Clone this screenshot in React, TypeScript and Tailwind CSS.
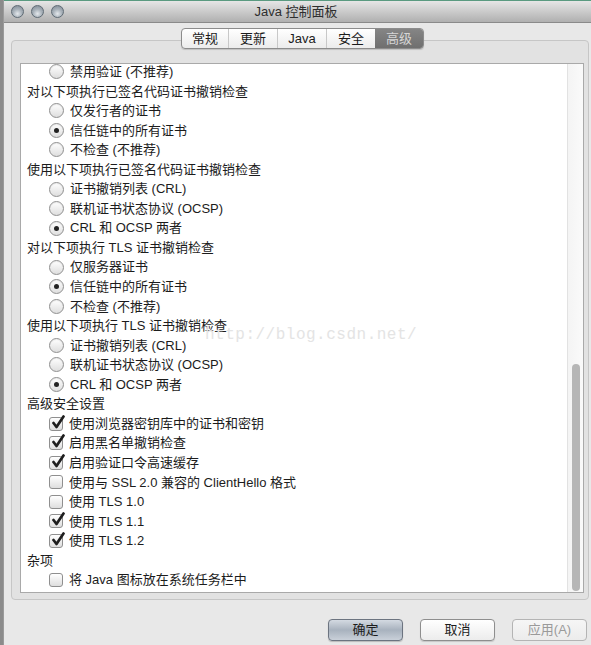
import React from "react";

type Row =
  | { kind: "head"; label: string }
  | { kind: "radio"; label: string; on?: boolean }
  | { kind: "check"; label: string; on?: boolean };

const rows: Row[] = [
  { kind: "radio", label: "禁用验证 (不推荐)" },
  { kind: "head", label: "对以下项执行已签名代码证书撤销检查" },
  { kind: "radio", label: "仅发行者的证书" },
  { kind: "radio", label: "信任链中的所有证书", on: true },
  { kind: "radio", label: "不检查 (不推荐)" },
  { kind: "head", label: "使用以下项执行已签名代码证书撤销检查" },
  { kind: "radio", label: "证书撤销列表 (CRL)" },
  { kind: "radio", label: "联机证书状态协议 (OCSP)" },
  { kind: "radio", label: "CRL 和 OCSP 两者", on: true },
  { kind: "head", label: "对以下项执行 TLS 证书撤销检查" },
  { kind: "radio", label: "仅服务器证书" },
  { kind: "radio", label: "信任链中的所有证书", on: true },
  { kind: "radio", label: "不检查 (不推荐)" },
  { kind: "head", label: "使用以下项执行 TLS 证书撤销检查" },
  { kind: "radio", label: "证书撤销列表 (CRL)" },
  { kind: "radio", label: "联机证书状态协议 (OCSP)" },
  { kind: "radio", label: "CRL 和 OCSP 两者", on: true },
  { kind: "head", label: "高级安全设置" },
  { kind: "check", label: "使用浏览器密钥库中的证书和密钥", on: true },
  { kind: "check", label: "启用黑名单撤销检查", on: true },
  { kind: "check", label: "启用验证口令高速缓存", on: true },
  { kind: "check", label: "使用与 SSL 2.0 兼容的 ClientHello 格式" },
  { kind: "check", label: "使用 TLS 1.0" },
  { kind: "check", label: "使用 TLS 1.1", on: true },
  { kind: "check", label: "使用 TLS 1.2", on: true },
  { kind: "head", label: "杂项" },
  { kind: "check", label: "将 Java 图标放在系统任务栏中" },
];

const tabs = ["常规", "更新", "Java", "安全", "高级"];

function Radio({ on }: { on?: boolean }) {
  return (
    <div className="w-[15px] h-[15px] rounded-full border border-[#8f8f8f] bg-gradient-to-b from-white to-[#dedede] flex items-center justify-center shadow-[inset_0_1px_1px_rgba(0,0,0,0.08)]">
      {on && <div className="w-[5px] h-[5px] rounded-full bg-[#222]" />}
    </div>
  );
}

function Check({ on }: { on?: boolean }) {
  return (
    <div className="relative w-[14px] h-[14px] rounded-[3px] border border-[#8f8f8f] bg-gradient-to-b from-white to-[#dedede]">
      {on && (
        <svg className="absolute left-[1px] top-[-3px]" width="14" height="15" viewBox="0 0 14 15">
          <path d="M2.5 8 L5.5 12 L12.5 1.5" fill="none" stroke="#1e1e1e" strokeWidth="2.7" strokeLinecap="round" strokeLinejoin="round" />
        </svg>
      )}
    </div>
  );
}

function Light() {
  return (
    <div className="w-[13px] h-[13px] rounded-full border border-[#5f6b75] bg-[radial-gradient(circle_at_50%_70%,#e4e8ec_0%,#aab3bb_45%,#7b8791_100%)]" />
  );
}

export default function App() {
  return (
    <div className="w-[591px] h-[645px] flex overflow-hidden text-[13px] text-[#1c1c1c] font-['Liberation_Sans','Noto_Sans_CJK_SC',sans-serif]">
      <div className="w-[3px] bg-[#8b8b8b]" />
      <div className="flex-1 flex flex-col bg-[#e8e8e8] border-l border-[#9a9a9a]">
        {/* title bar */}
        <div className="h-[23px] shrink-0 border-t border-[#5a9a80] border-b border-b-[#8a8a8a] bg-gradient-to-b from-[#e6e6e6] to-[#b0b0b0] flex items-center relative">
          <div className="flex gap-[7px] pl-[7px]">
            <Light />
            <Light />
            <Light />
          </div>
          <div className="absolute left-0 right-0 text-center text-[#2e2e2e] pr-[3px] pointer-events-none">Java 控制面板</div>
        </div>

        {/* tabs */}
        <div className="relative z-10 mt-[5px] flex justify-center pl-[10px]">
          <div className="flex h-[21px] rounded-[4px] border border-[#8c8c8c] bg-gradient-to-b from-white to-[#ececec] shadow-[0_1px_1px_rgba(0,0,0,0.15)] overflow-hidden">
            {tabs.map((t, i) => (
              <div
                key={t}
                className={
                  i === 4
                    ? "w-[48px] flex items-center justify-center bg-gradient-to-b from-[#858585] to-[#6f6f6f] text-[#d6d6d6]"
                    : i === 0
                    ? "w-[46px] flex items-center justify-center"
                    : "w-[49px] flex items-center justify-center border-l border-[#c8c8c8]"
                }
              >
                {t}
              </div>
            ))}
          </div>
        </div>

        {/* group box */}
        <div className="ml-[7px] mr-[2px] -mt-[9px] h-[560px] shrink-0 rounded-[4px] border border-[#c6c6c6] bg-[#e2e2e2] pt-[22px] pl-[8px] pr-[4px] pb-[6px] flex">
          <div className="flex-1 flex border border-[#a9a9a9] bg-white overflow-hidden relative">
            <div className="flex-1 -mt-[2px]">
              {rows.map((r, i) => (
                <div key={i} className="h-[19.56px] flex items-center">
                  {r.kind === "head" ? (
                    <span className="pl-[6px]">{r.label}</span>
                  ) : (
                    <div className="flex items-center pl-[28px]">
                      {r.kind === "radio" ? <Radio on={r.on} /> : <Check on={r.on} />}
                      <span className="ml-[6px]">{r.label}</span>
                    </div>
                  )}
                </div>
              ))}
            </div>
            <div className="absolute left-[184px] top-[259px] text-[16px] text-[#e4e4e4] font-['Liberation_Mono',monospace] tracking-[0.5px] pointer-events-none">
              http://blog.csdn.net/
            </div>
            {/* scrollbar */}
            <div className="w-[16px] border-l border-[#e2e2e2] bg-gradient-to-r from-[#f4f4f4] to-[#fafafa] flex flex-col pt-[300px] pb-[1px] items-center">
              <div className="flex-1 w-[8px] rounded-full bg-[#b6b6b6]" />
            </div>
          </div>
        </div>

        {/* buttons */}
        <div className="flex justify-end gap-[17px] pr-[4px] mt-[19px]">
          <div className="w-[75px] h-[22px] rounded-[4px] border border-[#6c7480] bg-gradient-to-b from-[#d4dae2] via-[#a8b2be] to-[#c9d0d9] flex items-center justify-center shadow-[0_1px_1px_rgba(0,0,0,0.2)]">
            确定
          </div>
          <div className="w-[75px] h-[22px] rounded-[4px] border border-[#8e8e8e] bg-gradient-to-b from-white to-[#ececec] flex items-center justify-center shadow-[0_1px_1px_rgba(0,0,0,0.15)]">
            取消
          </div>
          <div className="w-[75px] h-[22px] rounded-[4px] border border-[#b4b4b4] bg-gradient-to-b from-[#f6f6f6] to-[#ececec] flex items-center justify-center text-[#9a9a9a]">
            应用(A)
          </div>
        </div>
      </div>
    </div>
  );
}
